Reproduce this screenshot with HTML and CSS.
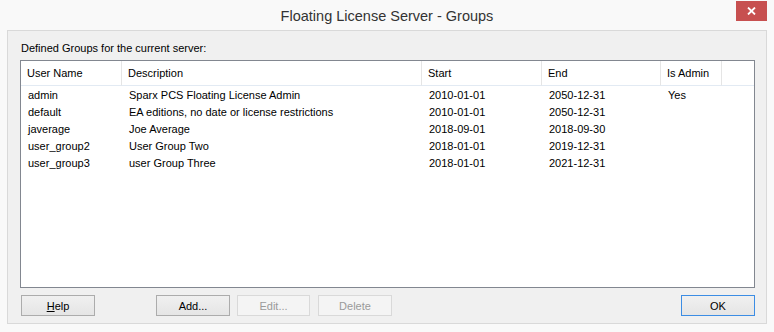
FILE: index.html
```html
<!DOCTYPE html>
<html>
<head>
<meta charset="utf-8">
<link rel="stylesheet" href="styles.css">
</head>
<body>
<div class="window">
  <div class="titlebar">
    <span class="title">Floating License Server - Groups</span>
    <div class="close"><svg width="9" height="8" viewBox="0 0 9 8"><path d="M1 0.5 L8 7.5 M8 0.5 L1 7.5" stroke="#fff" stroke-width="1.8" fill="none"/></svg></div>
  </div>
  <div class="client">
    <div class="label">Defined Groups for the current server:</div>
    <div class="list">
      <div class="grid">
        <div class="hd">User Name</div><div class="hd">Description</div><div class="hd">Start</div><div class="hd">End</div><div class="hd">Is Admin</div><div class="hd last"></div>

        <div class="c">admin</div><div class="c">Sparx PCS Floating License Admin</div><div class="c">2010-01-01</div><div class="c">2050-12-31</div><div class="c">Yes</div><div class="c"></div>
        <div class="c">default</div><div class="c">EA editions, no date or license restrictions</div><div class="c">2010-01-01</div><div class="c">2050-12-31</div><div class="c"></div><div class="c"></div>
        <div class="c">javerage</div><div class="c">Joe Average</div><div class="c">2018-09-01</div><div class="c">2018-09-30</div><div class="c"></div><div class="c"></div>
        <div class="c">user_group2</div><div class="c">User Group Two</div><div class="c">2018-01-01</div><div class="c">2019-12-31</div><div class="c"></div><div class="c"></div>
        <div class="c">user_group3</div><div class="c">user Group Three</div><div class="c">2018-01-01</div><div class="c">2021-12-31</div><div class="c"></div><div class="c"></div>
      </div>
    </div>
    <div class="buttons">
      <button class="btn help"><u>H</u>elp</button>
      <button class="btn add">Add...</button>
      <button class="btn edit" disabled>Edit...</button>
      <button class="btn del" disabled>Delete</button>
      <button class="btn ok">OK</button>
    </div>
  </div>
</div>
</body>
</html>
```
FILE: styles.css
```css
html, body {
  margin: 0;
  padding: 0;
}
body {
  width: 774px;
  height: 332px;
  background: #f9f9f9;
  font-family: "Liberation Sans", Arial, sans-serif;
  font-size: 11px;
  color: #000;
  overflow: hidden;
}
.window {
  width: 774px;
  height: 332px;
}
.titlebar {
  position: relative;
  height: 30px;
  display: flex;
  align-items: center;
  justify-content: center;
}
.title {
  font-size: 14.5px;
  color: #333;
  margin-top: 1px;
}
.close {
  position: absolute;
  left: 736px;
  top: 1px;
  width: 31px;
  height: 20px;
  background: #c75050;
  display: flex;
  align-items: center;
  justify-content: center;
}
.client {
  margin-left: 7px;
  width: 758px;
  height: 292px;
  border: 1px solid #d9d9d9;
  background: #f0f0f0;
  display: flex;
  flex-direction: column;
}
.label {
  margin: 10px 0 0 13px;
  line-height: 14px;
  height: 14px;
}
.list {
  margin: 5px 0 0 12px;
  width: 733px;
  height: 226px;
  border: 1px solid #828790;
  background: #fff;
}
.grid {
  display: grid;
  grid-template-columns: 101px 300px 120px 119px 61px 1fr;
  grid-template-rows: 26px;
  grid-auto-rows: 17px;
}
.hd {
  grid-row: 1;
  align-self: start;
  height: 24px;
  line-height: 25px;
  padding-left: 6px;
  border-right: 1px solid #e5e5e5;
  border-bottom: 1px solid #e2eaf3;
  white-space: nowrap;
}
.hd.last {
  border-right: none;
}
.c {
  line-height: 17px;
  padding-left: 7px;
  white-space: nowrap;
}
.buttons {
  display: flex;
  margin-top: 7px;
}
.btn {
  width: 74px;
  height: 21px;
  font-family: "Liberation Sans", Arial, sans-serif;
  font-size: 11px;
  color: #000;
  border: 1px solid #acacac;
  background: linear-gradient(#f0f0f0, #e5e5e5);
  padding: 0;
  margin: 0;
}
.btn:disabled {
  border-color: #d9d9d9;
  background: #f4f4f4;
  color: #9a9a9a;
}
.help { margin-left: 13px; }
.add { margin-left: 61px; }
.edit { margin-left: 7px; width: 73px; }
.del { margin-left: 8px; }
.ok {
  margin-left: auto;
  margin-right: 11px;
  border-color: #3c8de4;
}
```
